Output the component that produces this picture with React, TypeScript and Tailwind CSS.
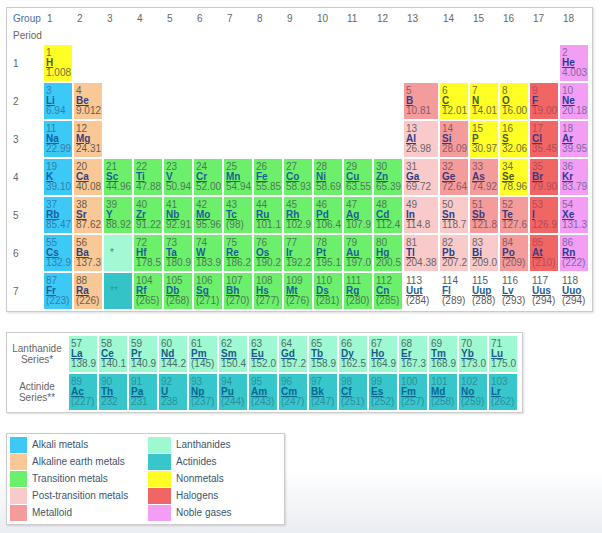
import React from 'react';

type Cat = 'a' | 'e' | 't' | 'p' | 'm' | 'n' | 'h' | 'g' | 'l' | 'c' | 'u';

interface El {
  sym: string;
  num: number;
  mass: string;
  cat: Cat;
}

// background / number colour / symbol colour per category
const STYLES: Record<Cat, { bg: string; text: string; sym: string }> = {
  a: { bg: 'bg-[#3dc9f6]', text: 'text-[#2f7fae]', sym: 'text-[#155f9d]' },
  e: { bg: 'bg-[#fac896]', text: 'text-[#6a5a4a]', sym: 'text-[#35407a]' },
  t: { bg: 'bg-[#6cf06c]', text: 'text-[#4d7a55]', sym: 'text-[#1c5f94]' },
  p: { bg: 'bg-[#f9caca]', text: 'text-[#6d6468]', sym: 'text-[#2c3f84]' },
  m: { bg: 'bg-[#f49b9b]', text: 'text-[#8a5a64]', sym: 'text-[#3c3a7a]' },
  n: { bg: 'bg-[#ffff26]', text: 'text-[#6e7038]', sym: 'text-[#4a5a28]' },
  h: { bg: 'bg-[#f26565]', text: 'text-[#b24b52]', sym: 'text-[#3a3a80]' },
  g: { bg: 'bg-[#f49df4]', text: 'text-[#7a6aa6]', sym: 'text-[#2c3a96]' },
  l: { bg: 'bg-[#9ef8d2]', text: 'text-[#4e6e68]', sym: 'text-[#1c5a8a]' },
  c: { bg: 'bg-[#37c6cb]', text: 'text-[#2f8e9e]', sym: 'text-[#0d6690]' },
  u: { bg: 'bg-white', text: 'text-[#5a5a5a]', sym: 'text-[#1c5f9a]' },
};

// "Sym num mass cat" entries, "-" is an empty slot, "*" / "**" the series markers
const ROWS: string[][] = [
  ['H 1 1.008 n', ...Array(16).fill('-'), 'He 2 4.003 g'],
  ['Li 3 6.94 a', 'Be 4 9.012 e', ...Array(10).fill('-'), 'B 5 10.81 m', 'C 6 12.01 n', 'N 7 14.01 n', 'O 8 16.00 n', 'F 9 19.00 h', 'Ne 10 20.18 g'],
  ['Na 11 22.99 a', 'Mg 12 24.31 e', ...Array(10).fill('-'), 'Al 13 26.98 p', 'Si 14 28.09 m', 'P 15 30.97 n', 'S 16 32.06 n', 'Cl 17 35.45 h', 'Ar 18 39.95 g'],
  ['K 19 39.10 a', 'Ca 20 40.08 e', 'Sc 21 44.96 t', 'Ti 22 47.88 t', 'V 23 50.94 t', 'Cr 24 52.00 t', 'Mn 25 54.94 t', 'Fe 26 55.85 t', 'Co 27 58.93 t', 'Ni 28 58.69 t', 'Cu 29 63.55 t', 'Zn 30 65.39 t', 'Ga 31 69.72 p', 'Ge 32 72.64 m', 'As 33 74.92 m', 'Se 34 78.96 n', 'Br 35 79.90 h', 'Kr 36 83.79 g'],
  ['Rb 37 85.47 a', 'Sr 38 87.62 e', 'Y 39 88.92 t', 'Zr 40 91.22 t', 'Nb 41 92.91 t', 'Mo 42 95.96 t', 'Tc 43 (98) t', 'Ru 44 101.1 t', 'Rh 45 102.9 t', 'Pd 46 106.4 t', 'Ag 47 107.9 t', 'Cd 48 112.4 t', 'In 49 114.8 p', 'Sn 50 118.7 p', 'Sb 51 121.8 m', 'Te 52 127.6 m', 'I 53 126.9 h', 'Xe 54 131.3 g'],
  ['Cs 55 132.9 a', 'Ba 56 137.3 e', '*', 'Hf 72 178.5 t', 'Ta 73 180.9 t', 'W 74 183.9 t', 'Re 75 186.2 t', 'Os 76 190.2 t', 'Ir 77 192.2 t', 'Pt 78 195.1 t', 'Au 79 197.0 t', 'Hg 80 200.5 t', 'Tl 81 204.38 p', 'Pb 82 207.2 p', 'Bi 83 209.0 p', 'Po 84 (209) m', 'At 85 (210) h', 'Rn 86 (222) g'],
  ['Fr 87 (223) a', 'Ra 88 (226) e', '**', 'Rf 104 (265) t', 'Db 105 (268) t', 'Sg 106 (271) t', 'Bh 107 (270) t', 'Hs 108 (277) t', 'Mt 109 (276) t', 'Ds 110 (281) t', 'Rg 111 (280) t', 'Cn 112 (285) t', 'Uut 113 (284) u', 'Fl 114 (289) u', 'Uup 115 (288) u', 'Lv 116 (293) u', 'Uus 117 (294) u', 'Uuo 118 (294) u'],
];

const LANTHANIDES = 'La 57 138.9,Ce 58 140.1,Pr 59 140.9,Nd 60 144.2,Pm 61 (145),Sm 62 150.4,Eu 63 152.0,Gd 64 157.2,Tb 65 158.9,Dy 66 162.5,Ho 67 164.9,Er 68 167.3,Tm 69 168.9,Yb 70 173.0,Lu 71 175.0'
  .split(',')
  .map((s) => s + ' l');
const ACTINIDES = 'Ac 89 (227),Th 90 232,Pa 91 231,U 92 238,Np 93 (237),Pu 94 (244),Am 95 (243),Cm 96 (247),Bk 97 (247),Cf 98 (251),Es 99 (252),Fm 100 (257),Md 101 (258),No 102 (259),Lr 103 (262)'
  .split(',')
  .map((s) => s + ' c');

const parse = (s: string): El => {
  const [sym, num, mass, cat] = s.split(' ');
  return { sym, num: Number(num), mass, cat: cat as Cat };
};

const LEGEND: [Cat, string][][] = [
  [
    ['a', 'Alkali metals'],
    ['e', 'Alkaline earth metals'],
    ['t', 'Transition metals'],
    ['p', 'Post-transition metals'],
    ['m', 'Metalloid'],
  ],
  [
    ['l', 'Lanthanides'],
    ['c', 'Actinides'],
    ['n', 'Nonmetals'],
    ['h', 'Halogens'],
    ['g', 'Noble gases'],
  ],
];

const Cell: React.FC<{ el: El }> = ({ el }) => {
  const st = STYLES[el.cat];
  return (
    <div className={`${st.bg} ${st.text} pl-[2px] pt-[3px] text-[10px] leading-[10px] whitespace-nowrap overflow-visible`}>
      <div>{el.num}</div>
      <div className={`font-bold underline ${st.sym}`}>{el.sym}</div>
      <div>{el.mass}</div>
    </div>
  );
};

const Slot: React.FC<{ code: string }> = ({ code }) => {
  if (code === '-') return <div />;
  if (code === '*')
    return <div className="bg-[#a2f9d4] text-[#6a7a74] text-[10px] leading-[10px] pl-[6px] pt-[13px]">*</div>;
  if (code === '**')
    return <div className="bg-[#34c4c8] text-[#2a9aa0] text-[10px] leading-[10px] pl-[6px] pt-[13px]">**</div>;
  return <Cell el={parse(code)} />;
};

const frame = 'border border-[#cbcbcb] bg-white shadow-[1px_1px_2px_rgba(0,0,0,0.14)]';

export default function App() {
  return (
    <div
      className="w-[602px] h-[533px] bg-gradient-to-b from-white from-[88%] to-[#eaedf2] pt-[7px] pl-[6px] text-[#555]"
      style={{ fontFamily: '"Liberation Sans", Arial, sans-serif' }}
    >
      {/* main table */}
      <div className={`${frame} w-[587px] h-[305px] pt-[4px]`}>
        <div className="grid grid-cols-[35px_repeat(12,28px)_34px_repeat(5,28px)] grid-rows-[14px_15px_repeat(7,36px)] gap-[2px]">
          <div className="pl-[6px] text-[10px] leading-[14px] text-[#4a6e9e]">Group</div>
          {Array.from({ length: 18 }, (_, i) => (
            <div key={i} className="pl-[3px] text-[10px] leading-[14px] text-[#666]">
              {i + 1}
            </div>
          ))}
          <div className="pl-[6px] text-[10px] leading-[15px] text-[#666]">Period</div>
          {Array.from({ length: 18 }, (_, i) => (
            <div key={i} />
          ))}
          {ROWS.map((row, r) => (
            <React.Fragment key={r}>
              <div className="pl-[6px] flex items-center text-[10px] text-[#666]">{r + 1}</div>
              {row.map((code, c) => (
                <Slot key={c} code={code} />
              ))}
            </React.Fragment>
          ))}
        </div>
      </div>

      {/* lanthanide / actinide series */}
      <div className={`${frame} mt-[20px] w-[517px] h-[81px] pt-[3px]`}>
        <div className="grid grid-cols-[60px_repeat(15,28px)] grid-rows-[36px_36px] gap-[2px]">
          <div className="flex flex-col items-center justify-center text-[10px] leading-[11px] text-[#666]">
            <span>Lanthanide</span>
            <span>Series*</span>
          </div>
          {LANTHANIDES.map((s) => (
            <Cell key={s} el={parse(s)} />
          ))}
          <div className="flex flex-col items-center justify-center text-[10px] leading-[11px] text-[#666]">
            <span>Actinide</span>
            <span>Series**</span>
          </div>
          {ACTINIDES.map((s) => (
            <Cell key={s} el={parse(s)} />
          ))}
        </div>
      </div>

      {/* legend */}
      <div className={`${frame} mt-[20px] w-[279px] h-[92px] pt-[3px] pl-[3px] flex`}>
        {LEGEND.map((col, ci) => (
          <div key={ci} className={`flex flex-col gap-[1px] ${ci === 0 ? 'w-[138px]' : ''}`}>
            {col.map(([cat, label]) => (
              <div key={label} className="flex items-center h-[16px]">
                <div className={`${STYLES[cat].bg} h-[16px] ${ci === 0 ? 'w-[17px]' : 'w-[23px]'}`} />
                <span className="ml-[5px] text-[10px] leading-[16px] text-[#3d5570] whitespace-nowrap">{label}</span>
              </div>
            ))}
          </div>
        ))}
      </div>
    </div>
  );
}
